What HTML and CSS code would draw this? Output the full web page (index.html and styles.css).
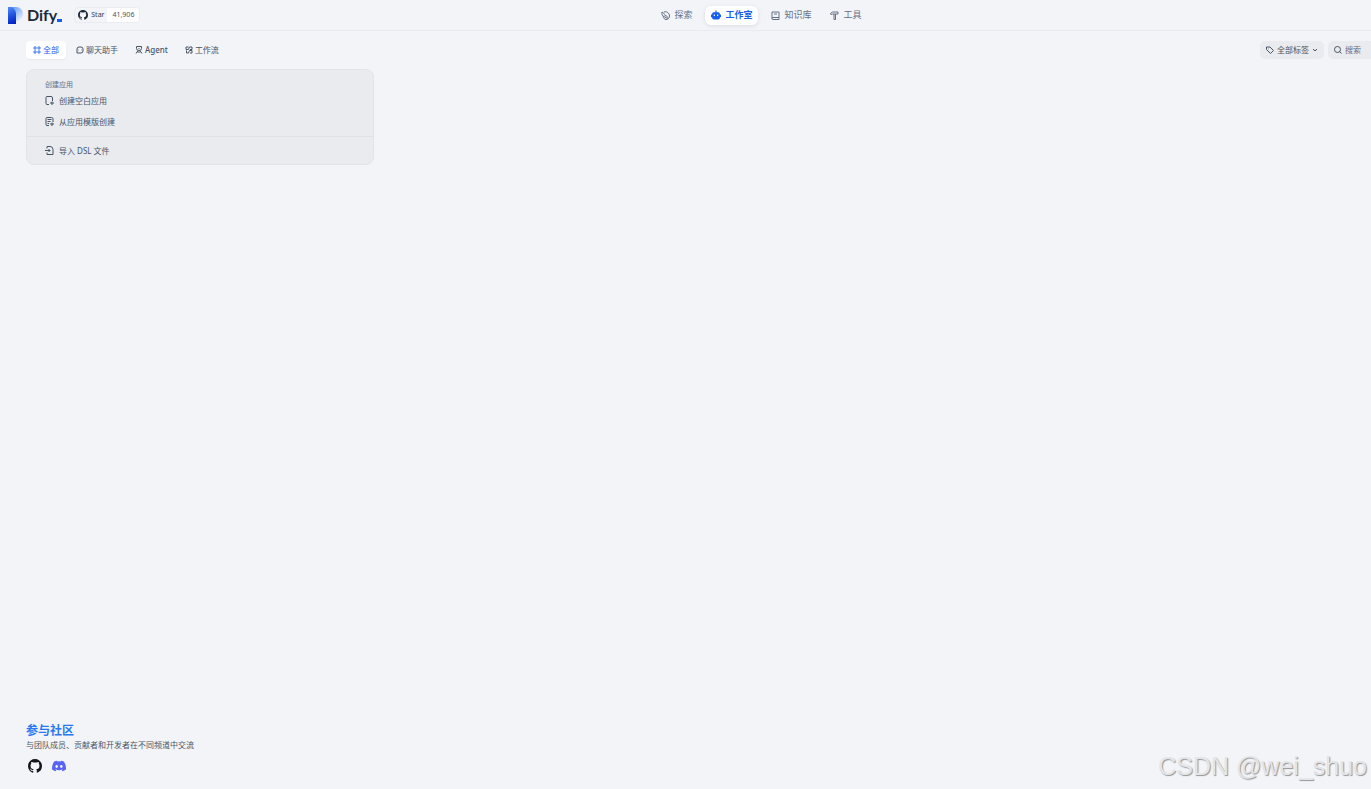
FILE: index.html
```html
<!DOCTYPE html>
<html lang="zh-Hans">

<head>
    <meta charset="UTF-8">
    <meta name="viewport" content="width=device-width, initial-scale=1">
    <title>工作室 - Dify</title>
    <link rel="stylesheet" href="styles.css">
</head>

<body>
    <header class="header">
        <div class="header-left">
            <a class="logo" href="#">
                <svg class="logo-mark" viewBox="0 0 15 17" aria-hidden="true">
                    <defs>
                        <linearGradient id="stem" x1="0.2" y1="0" x2="0.4" y2="1">
                            <stop offset="0" stop-color="#4d8af5" />
                            <stop offset="0.5" stop-color="#1f55e0" />
                            <stop offset="1" stop-color="#0526c4" />
                        </linearGradient>
                        <linearGradient id="bowl" x1="0.2" y1="0" x2="0.9" y2="0.9">
                            <stop offset="0" stop-color="#5e97f6" />
                            <stop offset="0.5" stop-color="#a4c4fa" />
                            <stop offset="1" stop-color="#e6effd" />
                        </linearGradient>
                    </defs>
                    <path d="M0 0h8a7 7 0 0 1 0 14H0z" fill="url(#bowl)" />
                    <path d="M0 0h4c2 2 4 3 4 7v10H0z" fill="url(#stem)" />
                </svg>
                <span class="logo-text">Dify</span>
                <span class="logo-cursor"></span>
            </a>
            <a class="star" href="#">
                <span class="star-label">
                    <svg class="icon-star" viewBox="0 0 16 16" fill="currentColor" aria-hidden="true">
                        <use href="#github" />
                    </svg>
                    Star
                </span>
                <span class="star-count">41,906</span>
            </a>
        </div>
        <nav class="nav">
            <a class="nav-item" href="#">
                <svg class="icon" viewBox="0 0 18 18" fill="none" stroke="currentColor" stroke-width="2" aria-hidden="true">
                    <path d="M6 2c5-2 11 2 11 8 0 4-3 7-7 7-3 0-5-3-6-6" />
                    <path d="M2 2c-1 3 0 6 2 8l9 5c1-2 0-4-2-5L8 9C7 6 5 3 2 2z" />
                </svg>
                探索
            </a>
            <a class="nav-item active" href="#">
                <svg class="icon-robot" viewBox="0 0 18 18" fill="currentColor" aria-hidden="true">
                    <path fill-rule="evenodd" d="M8 1h2v3h3a3 3 0 0 1 3 3v1h2v5h-2v1a3 3 0 0 1-3 3H5a3 3 0 0 1-3-3v-1H0V8h2V7a3 3 0 0 1 3-3h3zM5 8v3h2V8zm6 0v3h2V8z" />
                </svg>
                工作室
            </a>
            <a class="nav-item" href="#">
                <svg class="icon" viewBox="0 0 18 18" fill="none" stroke="currentColor" stroke-width="2" aria-hidden="true">
                    <path d="M2 15V2h14v15H4a2 2 0 0 1 0-4h12M6 6h6" />
                </svg>
                知识库
            </a>
            <a class="nav-item" href="#">
                <svg class="icon" viewBox="0 0 18 18" fill="none" stroke="currentColor" stroke-width="2" aria-hidden="true">
                    <path d="M1 6c1-3 3-4 5-4h10v4h-5v11H8V6H5L1 7M8 6h3" />
                </svg>
                工具
            </a>
        </nav>
        <div class="header-right"></div>
    </header>

    <main class="main">
        <div class="toolbar">
            <div class="tabs">
                <button class="tab active" type="button">
                    <svg class="icon-tab" viewBox="0 0 16 16" fill="none" stroke="currentColor" stroke-width="2" aria-hidden="true">
                        <rect x="2" y="2" width="4" height="4" rx="1" />
                        <rect x="10" y="2" width="4" height="4" rx="1" />
                        <rect x="2" y="10" width="4" height="4" rx="1" />
                        <rect x="10" y="10" width="4" height="4" rx="1" />
                    </svg>
                    全部
                </button>
                <button class="tab" type="button">
                    <svg class="icon-tab" viewBox="0 0 16 16" fill="none" stroke="currentColor" stroke-width="2" aria-hidden="true">
                        <path d="M2 14V6a4 4 0 0 1 4-4h4a4 4 0 0 1 4 4v4a4 4 0 0 1-4 4zM5 8h1M10 8h1" />
                    </svg>
                    聊天助手
                </button>
                <button class="tab" type="button">
                    <svg class="icon-tab" viewBox="0 0 16 16" fill="none" stroke="currentColor" stroke-width="2" aria-hidden="true">
                        <path d="M3 1h10v4a5 4 0 0 1-10 0zM6 5h1M9 5h1M2 15l4-6M14 15l-4-6M5 12h6" />
                    </svg>
                    <span class="tab-latin">Agent</span>
                </button>
                <button class="tab" type="button">
                    <svg class="icon-tab" viewBox="0 0 16 16" fill="none" stroke="currentColor" stroke-width="2" aria-hidden="true">
                        <path d="M7 2H2v5h5l2-5h5v5h-4M3 9v5h4l2-5h5v5h-4" />
                    </svg>
                    工作流
                </button>
            </div>
            <div class="filters">
                <button class="tag-filter" type="button">
                    <svg class="icon-tab" viewBox="0 0 16 16" fill="none" stroke="currentColor" stroke-width="2" aria-hidden="true">
                        <path d="M1 2v5l8 8 6-6-7-7z" />
                        <path d="M5 6h1" />
                    </svg>
                    全部标签
                    <svg class="icon-chevron" viewBox="0 0 12 12" fill="none" stroke="currentColor" stroke-width="2" aria-hidden="true">
                        <path d="M2 4l4 4 4-4" />
                    </svg>
                </button>
                <label class="search">
                    <svg class="icon-tab" viewBox="0 0 16 16" fill="none" stroke="currentColor" stroke-width="2" aria-hidden="true">
                        <circle cx="7" cy="7" r="6" />
                        <path d="M11 11l4 4" />
                    </svg>
                    <input class="search-input" type="text" placeholder="搜索" aria-label="搜索">
                </label>
            </div>
        </div>

        <section class="card">
            <div class="card-group">
                <h2 class="card-title">创建应用</h2>
                <button class="card-item" type="button">
                    <svg class="icon" viewBox="0 0 18 18" fill="none" stroke="currentColor" stroke-width="2" aria-hidden="true">
                        <path d="M8 17H4a2 2 0 0 1-2-2V3a2 2 0 0 1 2-2h8a3 3 0 0 1 3 3v6M14 11v7M10 14h8" />
                    </svg>
                    创建空白应用
                </button>
                <button class="card-item" type="button">
                    <svg class="icon" viewBox="0 0 18 18" fill="none" stroke="currentColor" stroke-width="2" aria-hidden="true">
                        <path d="M8 17H4a2 2 0 0 1-2-2V3a2 2 0 0 1 2-2h9a3 3 0 0 1 3 3v6M5 5h8M5 9h6M5 13h3M14 11v7M10 14h8" />
                    </svg>
                    从应用模版创建
                </button>
            </div>
            <div class="card-footer">
                <button class="card-item" type="button">
                    <svg class="icon" viewBox="0 0 18 18" fill="none" stroke="currentColor" stroke-width="2" aria-hidden="true">
                        <path d="M4 5V1h6a6 6 0 0 1 6 6v10H4v-4M0 9h10M7 6l3 3-3 3" />
                    </svg>
                    导入 DSL 文件
                </button>
            </div>
        </section>
    </main>

    <footer class="footer">
        <div class="community">
            <h3 class="community-title">参与社区</h3>
            <p class="community-text">与团队成员、贡献者和开发者在不同频道中交流</p>
            <div class="community-links">
                <a class="community-link" href="#" aria-label="GitHub">
                    <svg class="icon-social" viewBox="0 0 16 16" fill="#15171c" aria-hidden="true">
                        <path id="github" d="M8 0C3.58 0 0 3.58 0 8c0 3.54 2.29 6.53 5.47 7.59.4.07.55-.17.55-.38 0-.19-.01-.82-.01-1.49-2.01.37-2.53-.49-2.69-.94-.09-.23-.48-.94-.82-1.13-.28-.15-.68-.52-.01-.53.63-.01 1.08.58 1.23.82.72 1.21 1.87.87 2.33.66.07-.52.28-.87.51-1.07-1.78-.2-3.64-.89-3.64-3.95 0-.87.31-1.59.82-2.15-.08-.2-.36-1.02.08-2.12 0 0 .67-.21 2.2.82.64-.18 1.32-.27 2-.27s1.36.09 2 .27c1.53-1.04 2.2-.82 2.2-.82.44 1.1.16 1.92.08 2.12.51.56.82 1.27.82 2.15 0 3.07-1.87 3.75-3.65 3.95.29.25.54.73.54 1.48 0 1.07-.01 1.93-.01 2.2 0 .21.15.46.55.38A8.01 8.01 0 0 0 16 8c0-4.42-3.58-8-8-8z" />
                    </svg>
                </a>
                <a class="community-link" href="#" aria-label="Discord">
                    <svg class="icon-social" viewBox="0 0 16 16" fill="#5865f2" aria-hidden="true">
                        <path d="M13.55 2.91A13.2 13.2 0 0 0 10.28 1.9a9 9 0 0 0-.42.85 12.3 12.3 0 0 0-3.69 0 9 9 0 0 0-.42-.85c-1.14.2-2.23.54-3.26 1.01C.4 6-.16 9.05.1 12.06a13.3 13.3 0 0 0 3.99 2.02c.32-.44.6-.91.85-1.39-.46-.17-.9-.39-1.33-.66l.33-.26a9.5 9.5 0 0 0 8.13 0l.33.26c-.43.27-.87.49-1.33.66.25.48.53.95.85 1.39a13.2 13.2 0 0 0 4-2.02c.33-3.49-.56-6.51-2.37-9.15zM5.35 10.21c-.79 0-1.44-.72-1.44-1.61s.63-1.62 1.44-1.62 1.46.73 1.44 1.62c0 .89-.64 1.61-1.44 1.61zm5.32 0c-.79 0-1.44-.72-1.44-1.61s.63-1.62 1.44-1.62 1.46.73 1.44 1.62c0 .89-.63 1.61-1.44 1.61z" />
                    </svg>
                </a>
            </div>
        </div>
        <p class="watermark">CSDN @wei_shuo</p>
    </footer>
</body>

</html>
```

FILE: styles.css
```css
* {
    box-sizing: border-box;
}

body {
    display: flex;
    flex-direction: column;
    min-height: 100vh;
    margin: 0;
    color: #495464;
    background: #f2f4f8;
    font-family: "Noto Sans", "Noto Sans CJK SC", sans-serif;
    font-size: 8px;
    line-height: 12px;
}

a {
    color: inherit;
    text-decoration: none;
}

button {
    border: 0;
    padding: 0;
    color: inherit;
    background: none;
    font: inherit;
    cursor: pointer;
}

h2,
h3,
p {
    margin: 0;
}

svg {
    flex: none;
}

.icon {
    width: 9px;
    height: 9px;
}

.icon-robot {
    width: 10px;
    height: 10px;
}

.icon-tab {
    width: 8px;
    height: 8px;
}

.icon-chevron {
    width: 6px;
    height: 6px;
}

/* header */

.header {
    display: flex;
    align-items: center;
    height: 31px;
    border-bottom: 1px solid #e9ebf0;
}

.header-left {
    display: flex;
    flex: 9 1 0;
    align-items: center;
    gap: 12px;
    padding-left: 8px;
}

.header-right {
    flex: 7 1 0;
}

.logo {
    display: flex;
    align-items: center;
}

.logo-mark {
    width: 15px;
    height: 17px;
    margin-right: 4px;
}

.logo-text {
    color: #1d2939;
    font-family: Lato, sans-serif;
    font-size: 16px;
    font-weight: 700;
    line-height: 20px;
}

.logo-cursor {
    align-self: flex-end;
    width: 5px;
    height: 3px;
    margin-bottom: 3px;
    background: #155eef;
}

.star {
    display: flex;
    border: 1px solid #eaecf0;
    border-radius: 4px;
    overflow: hidden;
    font-size: 7px;
    line-height: 14px;
}

.star-label {
    display: flex;
    align-items: center;
    gap: 3px;
    padding: 0 3px;
    color: #344054;
}

.icon-star {
    width: 10px;
    height: 10px;
    color: #1d2939;
}

.star-count {
    padding: 0 5px;
    background: #fff;
}

.nav {
    display: flex;
    gap: 7px;
    color: #667085;
    font-size: 9px;
}

.nav-item {
    display: flex;
    align-items: center;
    gap: 4px;
    height: 19px;
    padding: 0 6px;
    border-radius: 6px;
}

.nav-item.active {
    color: #155eef;
    background: #fff;
    box-shadow: 0 1px 4px rgba(16, 24, 40, 0.1);
    font-weight: 700;
}

/* toolbar */

.main {
    flex: 1;
    padding-left: 26px;
}

.toolbar {
    display: flex;
    align-items: center;
    justify-content: space-between;
    height: 38px;
}

.tabs {
    display: flex;
    gap: 3px;
}

.filters {
    display: flex;
    gap: 4px;
}

.tab {
    display: flex;
    align-items: center;
    gap: 2px;
    height: 18px;
    padding: 0 7px;
    border-radius: 4px;
}

.tab-latin {
    font-weight: 500;
}

.tab.active {
    color: #155eef;
    background: #fff;
    box-shadow: 0 1px 2px rgba(16, 24, 40, 0.06);
}

.tag-filter,
.search {
    display: flex;
    align-items: center;
    gap: 3px;
    height: 18px;
    padding: 0 6px;
    border-radius: 5px;
    background: #e9ebef;
}

.search {
    width: 43px;
    padding-right: 0;
    border-radius: 5px 0 0 5px;
}

.search-input {
    flex: 1;
    min-width: 0;
    padding: 0;
    border: 0;
    outline: 0;
    color: inherit;
    background: none;
    font: inherit;
}

.search-input::placeholder {
    color: #667085;
}

/* create card */

.card {
    width: 100%;
    max-width: 348px;
    border: 1px solid #e2e4e9;
    border-radius: 8px;
    background: #e9ebef;
    color: #475467;
}

.card-group {
    padding: 9px 18px 4px;
}

.card-footer {
    padding: 3px 18px;
    border-top: 1px solid #e0e2e7;
}

.card-title {
    color: #667085;
    font-size: 7px;
    font-weight: 400;
    line-height: 11px;
}

.card-item {
    display: flex;
    align-items: center;
    gap: 5px;
    width: 100%;
    height: 21px;
}

/* footer */

.footer {
    display: flex;
    align-items: flex-end;
    justify-content: space-between;
    padding: 0 4px 8px 26px;
}

.community-title {
    color: #2878f0;
    font-size: 12px;
    font-weight: 700;
    line-height: 16px;
}

.community-links {
    display: flex;
    gap: 10px;
    padding: 8px 2px;
}

.community-link {
    display: flex;
}

.icon-social {
    width: 14px;
    height: 14px;
}

.watermark {
    color: #e4e5e8;
    font-family: "Liberation Sans", sans-serif;
    font-size: 25px;
    line-height: 30px;
    text-shadow: 1px 1px 1px #959595;
}
```
